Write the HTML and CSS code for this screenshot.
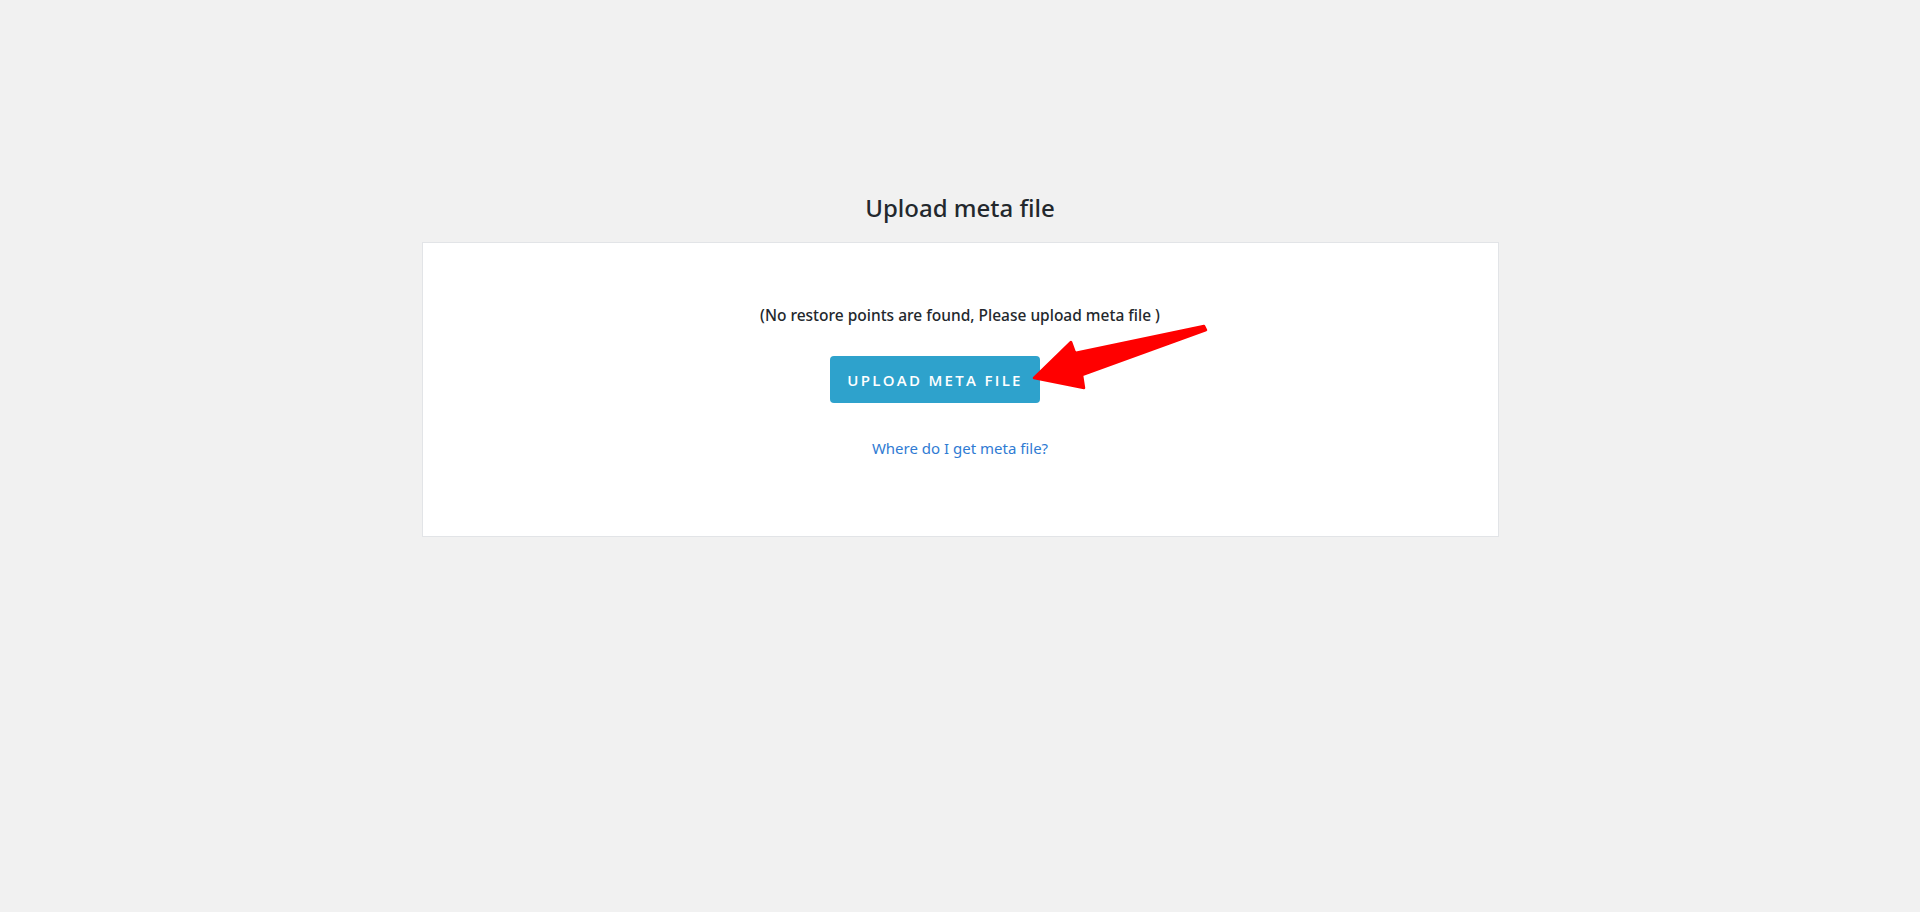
FILE: index.html
```html
<!DOCTYPE html>
<html lang="en">
<head>
<meta charset="utf-8">
<title>Upload meta file</title>
<link rel="stylesheet" href="styles.css">
</head>
<body>
<div class="page">
  <h2 class="title">Upload meta file</h2>
  <div class="card">
    <p class="message">(No restore points are found, Please upload meta file )</p>
    <button class="upload-btn" type="button">UPLOAD META FILE</button>
    <a class="help-link" href="#">Where do I get meta file?</a>
    <svg class="arrow" width="180" height="72" viewBox="0 0 180 72" aria-hidden="true">
      <polygon points="3,56 40,20 44,31 173,4 175,8 51,53 53,66" fill="#ff0000" stroke="#ff0000" stroke-width="2.5" stroke-linejoin="round"/>
    </svg>
  </div>
</div>
</body>
</html>
```

FILE: styles.css
```css
html, body {
  margin: 0;
  padding: 0;
}
body {
  background: #f1f1f1;
  font-family: "Noto Sans", "Open Sans", "Liberation Sans", sans-serif;
  color: #23282d;
  min-height: 912px;
}
.page {
  padding-top: 192px;
  display: flex;
  flex-direction: column;
  align-items: center;
}
.title {
  margin: 0 0 18px;
  font-size: 24px;
  line-height: 32px;
  font-weight: 500;
  color: #23282d;
}
.card {
  position: relative;
  box-sizing: border-box;
  width: 1077px;
  background: #fff;
  border: 1px solid #e2e4e7;
  padding: 60px 0 76px;
  display: flex;
  flex-direction: column;
  align-items: center;
}
.message {
  margin: 0 0 29px;
  font-size: 15.5px;
  line-height: 24px;
  font-weight: 500;
  color: #23282d;
}
.upload-btn {
  box-sizing: border-box;
  height: 47px;
  width: 210px;
  margin-right: 50px;
  padding: 0;
  border: none;
  border-radius: 4px;
  background: #2ea2cc;
  color: #fff;
  font-family: "Open Sans", "Noto Sans", sans-serif;
  font-size: 15px;
  font-weight: 600;
  letter-spacing: 2.3px;
  cursor: pointer;
}
.help-link {
  margin-top: 33px;
  font-size: 15px;
  line-height: 24px;
  color: #2f7bd3;
  text-decoration: none;
}
.arrow {
  position: absolute;
  left: 608px;
  top: 79px;
}
```
